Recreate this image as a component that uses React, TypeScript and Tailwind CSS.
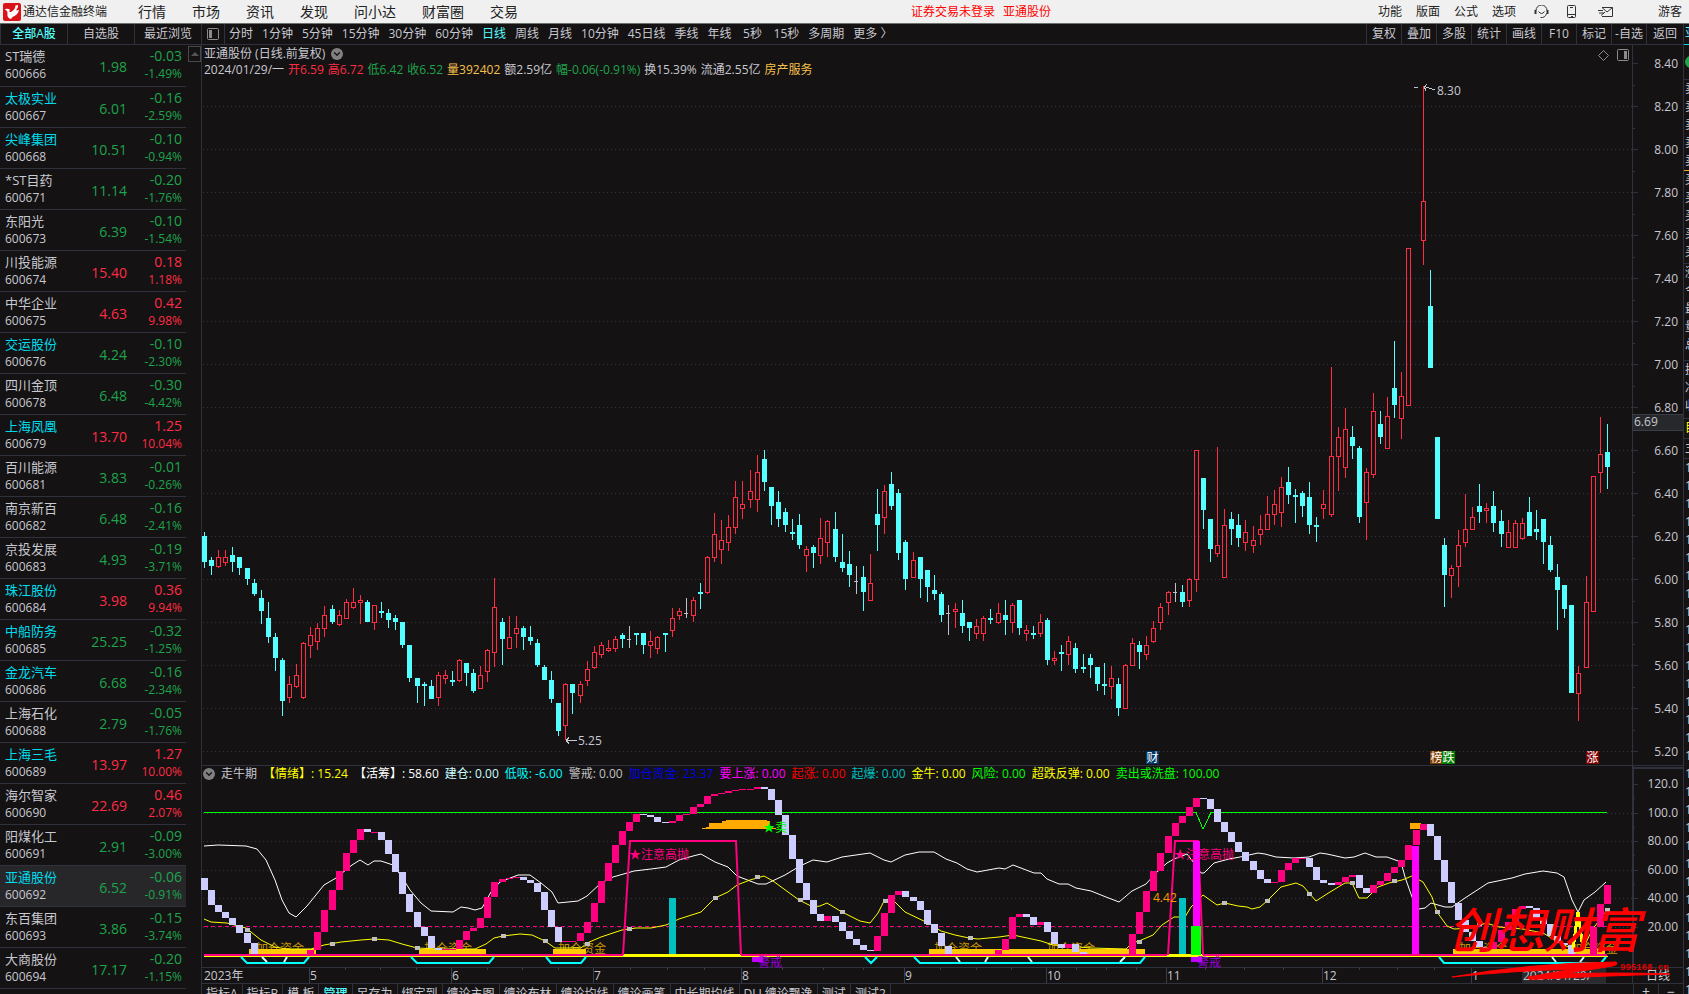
import { useState } from "react";
import { ChevronDown } from "lucide-react";

type Stock = [name: string, code: string, price: string, change: string, percent: string, marked?: boolean];

// 行情列表 //
const stocks: Stock[] = [
    ["ST瑞德", "600666", "1.98", "-0.03", "-1.49%"],
    ["太极实业", "600667", "6.01", "-0.16", "-2.59%", true],
    ["尖峰集团", "600668", "10.51", "-0.10", "-0.94%", true],
    ["*ST目药", "600671", "11.14", "-0.20", "-1.76%"],
    ["东阳光", "600673", "6.39", "-0.10", "-1.54%"],
    ["川投能源", "600674", "15.40", "0.18", "1.18%"],
    ["中华企业", "600675", "4.63", "0.42", "9.98%"],
    ["交运股份", "600676", "4.24", "-0.10", "-2.30%", true],
    ["四川金顶", "600678", "6.48", "-0.30", "-4.42%"],
    ["上海凤凰", "600679", "13.70", "1.25", "10.04%", true],
    ["百川能源", "600681", "3.83", "-0.01", "-0.26%"],
    ["南京新百", "600682", "6.48", "-0.16", "-2.41%"],
    ["京投发展", "600683", "4.93", "-0.19", "-3.71%"],
    ["珠江股份", "600684", "3.98", "0.36", "9.94%", true],
    ["中船防务", "600685", "25.25", "-0.32", "-1.25%", true],
    ["金龙汽车", "600686", "6.68", "-0.16", "-2.34%", true],
    ["上海石化", "600688", "2.79", "-0.05", "-1.76%"],
    ["上海三毛", "600689", "13.97", "1.27", "10.00%", true],
    ["海尔智家", "600690", "22.69", "0.46", "2.07%"],
    ["阳煤化工", "600691", "2.91", "-0.09", "-3.00%"],
    ["亚通股份", "600692", "6.52", "-0.06", "-0.91%", true],
    ["东百集团", "600693", "3.86", "-0.15", "-3.74%"],
    ["大商股份", "600694", "17.17", "-0.20", "-1.15%"],
];

const menus = ["行情", "市场", "资讯", "发现", "问小达", "财富圈", "交易"];
const systemMenus = ["功能", "版面", "公式", "选项"];
const listTabs = ["全部A股", "自选股", "最近浏览"];
const periods = [
    "分时", "1分钟", "5分钟", "15分钟", "30分钟", "60分钟", "日线", "周线", "月线",
    "10分钟", "45日线", "季线", "年线", "5秒", "15秒", "多周期", "更多 〉",
];
const tools = ["复权", "叠加", "多股", "统计", "画线", "F10", "标记", "-自选", "返回"];
const templates = [
    "指标A", "指标B", "模 板", "管理", "另存为", "绑定到", "缠论主图", "缠论布林", "缠论均线",
    "缠论画笔", "中长期均线", "DLL缠论飘逸", "测试", "测试2",
];

const quoteLine = [
    ["2024/01/29/一", "text-[#c8c8d0]"],
    ["开6.59", "text-[#ff2c44]"],
    ["高6.72", "text-[#ff2c44]"],
    ["低6.42", "text-[#1ea44b]"],
    ["收6.52", "text-[#1ea44b]"],
    ["量392402", "text-[#f4c04a]"],
    ["额2.59亿", "text-[#c8c8d0]"],
    ["幅-0.06(-0.91%)", "text-[#1ea44b]"],
    ["换15.39%", "text-[#c8c8d0]"],
    ["流通2.55亿", "text-[#c8c8d0]"],
    ["房产服务", "text-[#f4c04a]"],
];

const indicatorLine = [
    ["【情绪】: 15.24", "text-[#ffff00]"],
    ["【活筹】: 58.60", "text-white"],
    ["建仓: 0.00", "text-[#ccffff]"],
    ["低吸: -6.00", "text-[#00ffff]"],
    ["警戒: 0.00", "text-[#c0c0c0]"],
    ["加仓资金: 23.37", "text-[#0000e8]"],
    ["要上涨: 0.00", "text-[#ff00ff]"],
    ["起涨: 0.00", "text-[#ff0000]"],
    ["起爆: 0.00", "text-[#00c0c0]"],
    ["金牛: 0.00", "text-[#ffff00]"],
    ["风险: 0.00", "text-[#00ff00]"],
    ["超跌反弹: 0.00", "text-[#ffff00]"],
    ["卖出或洗盘: 100.00", "text-[#00ff00]"],
];

// K线: 类型(u 阳 / d 阴 / f 平), 最高, 实体上沿, 实体下沿, 最低 //
const candles = `d532,536,562,568 d557,560,566,575 u550,557,567,568 u550,557,563,566 d547,555,562,572 d557,557,568,575
d568,568,579,585 d579,583,594,596 d590,598,611,624 d602,618,637,643 d633,637,658,671 d658,660,701,716
u676,684,698,703 u664,675,687,688 u642,643,698,699 u627,635,646,658 u623,628,642,650 u606,615,629,637
d605,609,622,624 u610,615,625,626 u599,602,619,619 u588,602,608,609 u595,600,603,624 d600,602,622,622
u605,605,623,630 d602,611,613,618 d609,613,620,628 d615,618,622,630 d622,622,645,648 d645,645,678,682
d678,678,686,703 d682,684,686,706 d680,686,699,699 u672,675,698,706 u670,675,679,684 d671,680,682,686
u659,660,681,682 d663,663,673,686 d669,673,691,693 u666,675,689,689 u649,650,672,682 u578,607,653,667
d618,622,639,665 u616,637,649,649 u616,628,634,648 d626,628,637,650 d626,637,641,645 d639,643,665,667
d665,667,680,680 d671,680,699,703 d703,703,731,736 u683,684,726,740 d684,684,693,714 u681,684,696,703
u661,669,681,686 u646,652,668,669 u642,645,655,658 u640,648,651,652 u636,639,649,652 d633,635,639,648
f626,639,640,648 d633,633,635,645 d633,633,645,654 u631,641,646,658 u636,637,649,654 d633,633,635,652
u608,618,631,637 u608,611,616,620 f598,613,614,618 u597,600,616,622 d583,592,594,609 u556,557,593,594
u513,534,558,562 u520,540,550,564 u515,527,543,551 u481,497,528,534 u481,504,509,519 u470,491,500,508
u455,472,500,512 d450,459,482,491 d487,487,506,525 d491,502,519,527 d508,512,525,532 d519,532,534,540
d514,525,545,549 u546,549,556,572 d545,547,553,568 u518,538,556,564 u520,521,543,557 d512,529,557,562
d534,562,568,572 d551,564,575,587 f566,581,582,594 d566,577,592,611 u554,583,601,601 d489,514,525,551
u485,491,518,534 d472,484,506,510 d489,493,553,560 d540,542,579,590 u552,560,578,578 d557,557,579,598
d570,570,587,602 d575,590,594,600 d592,594,615,622 f605,613,614,635 u603,609,612,628 d600,613,626,633
d622,622,628,641 u619,626,634,639 u616,618,634,641 d609,618,620,624 u603,613,623,624 d600,615,620,635
u603,605,623,633 d600,600,628,635 u625,630,634,641 d626,633,635,639 u614,622,634,637 d618,620,660,665
u651,658,661,665 d645,652,654,671 u636,641,655,665 d643,648,669,673 d654,667,669,673 d654,658,665,678
d667,667,684,691 d663,684,686,695 u666,678,687,699 d678,684,708,716 u664,665,709,709 u638,643,666,666
d641,645,652,669 u636,645,655,660 u621,628,642,643 u603,607,623,630 u591,592,603,615 f583,592,593,602
d585,592,602,607 u578,579,601,607 u450,450,580,592 d478,478,510,529 d519,519,549,562 u447,545,554,557
u509,525,578,578 d512,519,529,545 d514,525,538,547 u520,532,543,551 u526,540,546,553 u515,529,535,545
u496,514,530,530 u490,504,515,525 u477,487,513,527 d467,482,495,504 d489,495,497,523 d491,493,506,517
d482,497,525,534 d517,525,527,542 u490,504,509,519 u367,456,515,517 u427,437,457,491 u408,429,468,478
d426,437,446,459 d446,448,517,523 u468,472,503,540 u393,411,475,478 d411,424,437,444 u397,416,449,449
d341,388,405,418 u372,396,419,439 u248,248,406,406 f87,87,88,88 u86,201,241,265 d270,306,368,368
d437,437,519,519 d538,545,575,607 u565,568,576,598 u530,545,567,587 u494,529,543,547 u507,517,530,530
d484,506,512,523 u503,508,511,523 d491,506,523,532 d510,521,534,547 u520,532,548,548 u520,523,548,548
u518,523,539,540 d497,512,536,536 d510,529,532,540 d519,519,542,564 d536,545,570,572 d564,577,590,630
d585,585,609,618 d605,605,693,693 u666,673,694,721 u576,602,668,668 u476,476,612,612 u417,454,473,493
d424,452,467,489`
    .split(/\s+/)
    .map(item => ({ kind: item[0], ys: item.slice(1).split(",").map(Number) }));

// 走牛期 阶梯柱 //
const steps = [
    878, 890, 905, 912, 918, 925, 933, 943, 954, 956, 955, 955, 955, 955, 955, 955, 950, 932, 910, 890, 871, 853, 840,
    829, 832, 832, 840, 854, 872, 894, 912, 927, 936, 948, 950, 949, 949, 940, 931, 928, 918, 897, 882, 879, 878,
    877, 880, 883, 892, 910, 927, 942, 941, 941, 933, 922, 903, 881, 863, 845, 831, 822, 814, 815, 817, 822, 823,
    821, 815, 814, 807, 804, 796, 794, 793, 791, 790, 789, 789, 787, 789, 800, 815, 835, 859, 883, 900, 914, 921,
    916, 922, 931, 939, 945, 950, 951, 936, 913, 895, 891, 897, 901, 910, 924, 933, 946, 955, 955, 955, 955, 955,
    955, 955, 950, 939, 917, 914, 917, 925, 922, 932, 944, 948, 944, 952, 955, 955, 955, 955, 955, 955, 955, 934,
    912, 891, 871, 853, 836, 823, 816, 807, 798, 799, 809, 822, 832, 842, 852, 861, 870, 879, 883, 882, 870, 863,
    858, 858, 867, 880, 883, 885, 882, 877, 875, 888, 893, 885, 881, 873, 867, 860, 845, 830, 824, 836, 860, 882,
    903, 920, 932, 941, 947, 949, 942, 930, 922, 909, 906, 908, 918, 924, 936, 943, 945, 955, 955, 955, 927, 904, 885,
];

const whiteLine = `204,846 218,845 246,846 257,849 266,860 275,880 282,900 289,913 296,917 307,906 324,885 336,878
352,865 360,860 368,865 374,861 381,861 393,865 402,877 410,890 421,903 431,911 453,912 461,907 468,908 475,910
482,908 491,892 500,882 518,875 530,875 541,883 552,892 558,903 578,901 587,896 601,883 613,877 634,871 651,869
666,867 679,860 693,856 701,854 715,862 728,867 737,876 758,884 766,884 785,875 800,866 813,860 827,862 842,857
870,853 884,860 891,862 905,855 919,852 934,852 946,859 957,863 967,869 977,872 999,868 1005,869 1013,865
1034,873 1041,873 1047,879 1059,884 1068,884 1076,888 1091,891 1106,897 1119,902 1132,891 1146,884 1156,873
1167,863 1174,859 1187,854 1194,863 1201,873 1204,873 1214,863 1229,859 1240,857 1258,853 1265,854 1276,857
1294,858 1309,857 1320,853 1327,854 1345,858 1354,857 1365,853 1376,857 1387,857 1401,862 1405,877 1412,897
1419,909 1425,908 1431,903 1445,907 1452,907 1465,898 1488,883 1512,878 1525,874 1543,871 1557,873 1564,877
1572,900 1578,912 1584,900 1595,892 1606,882`;

const yellowLine = `204,919 211,922 227,923 246,928 261,940 275,947 286,949 311,949 324,945 341,942 361,940 374,939
389,940 402,944 417,948 439,949 475,949 486,944 494,938 503,936 520,934 532,935 545,941 555,948 581,948 587,943
601,937 622,930 636,928 651,928 666,925 679,919 701,912 715,898 728,892 737,885 750,880 764,876 773,881 799,900
813,907 820,906 827,903 842,912 860,921 870,923 878,913 884,901 892,899 905,912 928,923 941,931 955,935 969,938
978,939 999,937 1013,935 1027,938 1041,941 1053,945 1091,948 1126,949 1132,943 1139,941 1153,935 1162,925
1174,917 1185,917 1191,907 1203,895 1217,905 1225,903 1238,906 1247,907 1252,909 1260,907 1267,901 1281,887
1296,883 1303,886 1316,901 1330,892 1345,883 1352,883 1359,898 1367,898 1378,887 1389,883 1402,880 1412,876
1423,882 1432,897 1437,912 1447,926 1454,929 1472,928 1486,923 1499,927 1523,929 1543,933 1555,940 1570,948
1583,949 1592,930 1607,910`;

const markers = [
    [247, 930], [332, 944], [374, 939], [417, 948], [503, 936], [545, 941], [587, 944], [629, 929], [715, 898],
    [757, 877], [800, 900], [842, 912], [885, 901], [928, 923], [970, 938], [1139, 942], [1224, 903], [1267, 901],
    [1309, 894], [1352, 883], [1394, 881], [1437, 912], [1479, 924], [1607, 910],
];

const months = [
    [309, "5"], [451, "6"], [593, "7"], [741, "8"], [904, "9"], [1046, "10"], [1166, "11"], [1322, "12"], [1471, "1"],
] as const;
const monthTicks = [
    345, 380, 416, 487, 522, 558, 630, 667, 704, 782, 823, 863, 940, 976, 1011, 1076, 1106, 1136, 1205, 1244, 1283,
    1359, 1397, 1434,
];

const badges = [
    [1146, "财", "#003868"], [1430, "榜", "#804000"], [1442, "跌", "#008000"], [1586, "涨", "#800000"],
] as const;

const barX = (i: number) => Math.floor(204.5 + i * 7.085);
const isFall = (value: string) => value.startsWith("-");

function Logo() {
    return (
        <svg viewBox="0 0 18 18" className="h-[18px] w-[18px]" aria-hidden="true">
            <rect width="18" height="18" rx="2" fill="#d8141a" />
            <path d="M1.5 6.5 Q4 5 7 6.5 Q5.500 9.500 8 9 Q12 7 12.500 2.500 L15 2 Q15.500 4 13 7.500 L16 7 Q15 12 9.500 14 L8 16 Q3.500 15 4.500 10 Q4.500 7.500 1.500 6.500 Z" fill="#fff" />
        </svg>
    );
}

function PanelIcon() {
    return (
        <svg viewBox="0 0 12 12" className="h-3 w-3" aria-hidden="true">
            <rect x="0.5" y="0.5" width="11" height="11" rx="1" fill="none" stroke="#8c8c8c" />
            <rect x="2" y="2" width="3" height="8" fill="#8c8c8c" />
        </svg>
    );
}

function RoundArrow() {
    return (
        <button aria-label="展开" className="flex h-3 w-3 items-center justify-center rounded-full bg-[#808080]">
            <ChevronDown className="h-[10px] w-[10px] text-[#141213]" strokeWidth={3} />
        </button>
    );
}

// 顶部菜单 //
function MenuBar() {
    return (
        <header className="flex h-6 shrink-0 items-center border-b border-[#6a706c] bg-[#f0f0f0] text-[#222]">
            <div className="flex w-[138px] items-center gap-[2px] pl-[3px]">
                <Logo />
                <span className="text-xs">通达信金融终端</span>
            </div>
            <nav className="flex gap-[26px] text-sm leading-5">
                { menus.map(menu => <button key={menu}>{menu}</button>) }
            </nav>
            <div className="flex flex-1 justify-center gap-2 pl-[66px] text-xs text-[#ff0000]">
                <button>证券交易未登录</button>
                <button>亚通股份</button>
            </div>
            <nav className="flex items-center gap-[14px] text-xs">
                { systemMenus.map(menu => <button key={menu}>{menu}</button>) }
            </nav>
            <div className="flex items-center pl-[18px]">
                <button aria-label="客服" className="w-[33px]">
                    <svg viewBox="0 0 15 14" className="h-[14px] w-[15px]" fill="none" stroke="#333">
                        <path d="M2 5.500 A5.500 5.500 0 0 1 13 5.500 M12.500 8.500 A5.500 5.500 0 0 1 6.500 12.500 M4.500 6.500 Q7.500 10.500 10.500 6.500" />
                        <path d="M1.500 5 V9 M13.500 5 V9" strokeWidth="2" />
                    </svg>
                </button>
                <button aria-label="手机" className="w-[31px]">
                    <svg viewBox="0 0 10 14" className="h-[14px] w-[10px]" fill="none" stroke="#333">
                        <rect x="0.5" y="0.5" width="8" height="12" rx="1" />
                        <path d="M1 9.500 H8 M4 11.500 H6 M3 2.500 H6" />
                    </svg>
                </button>
                <button aria-label="消息" className="w-[60px]">
                    <svg viewBox="0 0 16 12" className="h-3 w-4" fill="none" stroke="#333">
                        <path d="M4 1.500 H14.500 V10.500 H4 M4 1.500 L9 6 L14.500 1.500 M0 4.500 H5 M1 7 H6 M3 9.500 L7 6" />
                    </svg>
                </button>
            </div>
            <button className="pr-[7px] text-xs">游客</button>
        </header>
    );
}

// 左侧股票列表 //
function StockList() {
    const [selected, setSelected] = useState("600692");
    const [tab, setTab] = useState("全部A股");

    return (
        <aside className="flex w-[202px] shrink-0 flex-col border-r border-[#2f313c]">
            <div className="grid h-[21px] shrink-0 grid-cols-3 border-b border-[#2f313c]">
                { listTabs.map(name => (
                    <button
                        key={name}
                        onClick={ () => setTab(name) }
                        className={`border-l border-[#2f313c] text-xs ${tab === name ? "font-medium text-[#54ffff]" : "text-[#c8c8d0]"}`}>
                        {name}
                    </button>
                )) }
            </div>
            <div className="flex min-h-0 flex-1 items-start justify-between overflow-hidden">
                <table className="w-[186px] border-collapse">
                    <tbody>
                        { stocks.map(([name, code, price, change, percent, marked]) => {
                            const color = isFall(change) ? "text-[#1ea44b]" : "text-[#ff2c44]";
                            return (
                                <tr
                                    key={code}
                                    onClick={ () => setSelected(code) }
                                    className={`h-[41px] border-b border-[#2f313c] leading-[18px] ${selected === code ? "bg-[#27272a]" : ""}`}>
                                    <td className="w-[70px] p-0 pl-[5px]">
                                        <div className={`text-[13px] ${marked ? "text-[#00dcec]" : "text-[#c8c8d0]"}`}>{name}</div>
                                        <div className="text-xs leading-[18px] text-[#c8c8d0]">{code}</div>
                                    </td>
                                    <td className={`p-0 pt-1 pr-[3px] text-right text-sm leading-[18px] ${color}`}>{price}</td>
                                    <td className={`w-14 p-0 pr-1 text-right ${color}`}>
                                        <div className="text-sm leading-[18px]">{change}</div>
                                        <div className="text-xs leading-[18px]">{percent}</div>
                                    </td>
                                </tr>
                            );
                        }) }
                    </tbody>
                </table>
                <button aria-label="向上滚动" className="mt-px flex h-4 w-[13px] items-center justify-center border border-[#48484c]">
                    <svg viewBox="0 0 8 4" className="h-1 w-2"><path d="M0 4 L4 0 L8 4 Z" fill="#555" /></svg>
                </button>
            </div>
        </aside>
    );
}

// 周期与工具栏 //
function PeriodBar() {
    const [period, setPeriod] = useState("日线");

    return (
        <div className="flex h-[21px] shrink-0 items-stretch border-b border-[#2f313c] text-xs text-[#c8c8d0]">
            <button aria-label="侧栏" className="flex w-[23px] items-center justify-center border-r border-[#2f313c]">
                <PanelIcon />
            </button>
            <div className="flex flex-1 items-center gap-[9px] pl-1">
                { periods.map(name => (
                    <button
                        key={name}
                        onClick={ () => setPeriod(name) }
                        className={`min-w-6 whitespace-nowrap ${period === name ? "text-[#54ffff]" : ""}`}>
                        {name}
                    </button>
                )) }
            </div>
            { tools.map(name => (
                <button key={name} className="w-[35px] border-l border-[#2f313c] whitespace-nowrap last:w-[37px]">{name}</button>
            )) }
        </div>
    );
}

// 日K线 //
function PriceChart() {
    const levels = Array.from({ length: 17 }, (_, i) => ({ y: 63 + i * 43, label: (8.4 - i * 0.2).toFixed(2) }));

    return (
        <section className="relative min-h-0 flex-1 border-b border-[#2f313c]">
            <svg viewBox="202 45 1481 720" className="absolute inset-0 h-full w-full" shapeRendering="crispEdges">
                { levels.map(({ y, label }, i) => (
                    <g key={label}>
                        { i > 0 && <path d={`M203 ${y + 0.5} H1632`} stroke="#33353f" strokeDasharray="1 3" /> }
                        <path d={`M1632 ${y + 0.5} H1638 M1632 ${y + 22} h3`} stroke="#2f313c" />
                        <text x="1678" y={y + 5} textAnchor="end" fill="#c8c8d0" fontSize="12">{label}</text>
                    </g>
                )) }
                <path d="M1632.500 45 V765" stroke="#2f313c" />
                <rect x="1632.500" y="414.500" width="51" height="16" fill="#27282b" stroke="#3a3c48" />
                <text x="1634" y="426" fill="#c8c8d0" fontSize="12">6.69</text>
                { candles.map(({ kind, ys: [high, top, bottom, low] }, i) => {
                    const x = barX(i);
                    if (kind === "u") {
                        return (
                            <g key={i} stroke="#ff2c44" fill="none">
                                <path d={`M${x + 0.5} ${high} V${top} M${x + 0.5} ${bottom} V${low}`} />
                                <rect x={x - 1.5} y={top + 0.5} width="4" height={bottom - top - 1} />
                            </g>
                        );
                    }
                    return (
                        <g key={i} fill={kind === "d" ? "#54ffff" : "#c0c0cc"}>
                            <rect x={x} y={high} width="1" height={low - high} />
                            <rect x={x - 2} y={top} width={kind === "d" ? 5 : 4} height={bottom - top} />
                        </g>
                    );
                }) }
                <path d="M566 740.500 H577 M566 740.500 l3 -3 M566 740.500 l3 3" stroke="#c8c8d0" />
                <text x="578" y="745" fill="#c8c8d0" fontSize="12">5.25</text>
                <path d="M1424 86.500 L1435 90 M1424 86.500 l3 -2 M1424 86.500 l2 4" stroke="#c8c8d0" fill="none" />
                <text x="1437" y="95" fill="#c8c8d0" fontSize="12">8.30</text>
                { badges.map(([x, label, color]) => (
                    <g key={label}>
                        <rect x={x} y="751" width="13" height="13" fill={color} />
                        <text x={x + 0.5} y="762" fill="#fff" fontSize="12">{label}</text>
                    </g>
                )) }
            </svg>
            <div className="relative flex justify-between pl-[2px] pr-[54px] pt-px text-xs leading-4">
                <div>
                    <div className="flex items-center gap-[6px] text-[#c8c8d0]">
                        <span>亚通股份 (日线.前复权)</span>
                        <RoundArrow />
                    </div>
                    <div className="flex gap-1">
                        { quoteLine.map(([text, color]) => <span key={text} className={color}>{text}</span>) }
                    </div>
                </div>
                <div className="flex h-[18px] items-center gap-2">
                    <svg viewBox="0 0 11 11" className="h-[11px] w-[11px]"><path d="M5.500 0.500 L10.500 5.500 L5.500 10.500 L0.500 5.500 Z" fill="none" stroke="#8c8c8c" /></svg>
                    <span className="rotate-180"><PanelIcon /></span>
                </div>
            </div>
        </section>
    );
}

// 副图指标: 走牛期 //
function IndicatorChart() {
    const levels = ["120.0", "100.0", "80.00", "60.00", "40.00", "20.00"];
    const funds = [[256, 249, 67], [424, 419, 67], [558, 553, 33], [934, 929, 100], [1047, 1029, 116], [1459, 1453, 100], [1570, 1553, 52]];

    return (
        <section className="relative h-[202px] shrink-0 border-b border-[#2f313c]">
            <svg viewBox="202 766 1481 201" className="absolute inset-0 h-full w-full overflow-visible" shapeRendering="crispEdges">
                { levels.map((label, i) => {
                    const y = Math.round(784 + i * 28.5);
                    return (
                        <g key={label}>
                            { i > 0 && <path d={`M203 ${y + 0.5} H1632`} stroke="#33353f" strokeDasharray="1 3" /> }
                            <path d={`M1633 ${y + 0.5} H1638 M1633 ${y + 14.5} h2`} stroke="#2f313c" />
                            <text x="1678" y={y + 4} textAnchor="end" fill="#c8c8d0" fontSize="12">{label}</text>
                        </g>
                    );
                }) }
                <path d="M1633 766 V968 M1633 767.500 H1683" stroke="#2f313c" strokeWidth="2" fill="none" />
                <path d="M204 812.500 H1196 L1203 829 L1211 812.500 H1607" stroke="#00ff00" fill="none" />
                <path d="M204 926.500 H1607" stroke="#ff0080" strokeDasharray="4 3" />

                { funds.map(([x]) => <text key={x} x={x} y="953" fill="#c89600" fontSize="12">加仓资金</text>) }
                { funds.map(([x, left, width]) => <rect key={x} x={left} y="949" width={width} height="5" fill="#ffc800" />) }

                <g fill="none" shapeRendering="auto">
                    <polyline points={whiteLine} stroke="#fff" />
                    <polyline points={yellowLine} stroke="#ffff00" />
                </g>
                { markers.map(([x, y]) => <rect key={x} x={x - 2} y={y - 2} width="5" height="4" fill="#c0c0c0" />) }

                <path d="M702 829 V828 L709 827 V823 H722 V821 L730 820 H763 L770 821 V826 L777 829 Z" fill="#ffaa00" />
                <rect x="1410" y="823" width="11" height="6" fill="#ffaa00" />
                <rect x="669" y="898" width="7" height="57" fill="#00c0c0" />
                <rect x="1179" y="898" width="7" height="57" fill="#00c0c0" />
                { steps.slice(1).map((y, i) => (
                    <rect
                        key={i}
                        x={barX(i) - 3}
                        y={Math.min(y, steps[i])}
                        width="7"
                        height={Math.max(Math.abs(y - steps[i]), 1)}
                        fill={y > steps[i] ? "#ccccff" : "#ff0080"} />
                )) }

                <path d="M204 955 H1607" stroke="#ff0080" strokeWidth="2" />
                <path d="M204 956.500 H1608" stroke="#ffff00" />
                <path d="M623 955.500 H741 M1167 955.500 H1203" stroke="#ffff00" strokeWidth="3" />
                <path d="M623 955 L630 841 H736 L741 955 M1168 955 L1175 841 H1198 L1203 955" stroke="#ff0080" strokeWidth="2" fill="none" shapeRendering="auto" />
                <rect x="1193" y="841" width="7" height="85" fill="#ff00ff" />
                <rect x="1191" y="926" width="10" height="29" fill="#00ff00" />
                <rect x="1412" y="846" width="7" height="108" fill="#ff00ff" />
                <path d="M1573 949 L1578 912 L1583 949" stroke="#ffff00" strokeWidth="3" fill="none" />

                <text x="758" y="967" fill="#9c00dc" fontSize="12">警戒</text>
                <text x="1197" y="967" fill="#9c00dc" fontSize="12">警戒</text>
                <path d="M752 957 h11 v5 h-11 Z M1191 957 h11 v5 h-11 Z" fill="#c000ff" />
                <text x="629" y="859" fill="#ff0080" fontSize="12">★注意高抛</text>
                <text x="1174" y="859" fill="#ff0080" fontSize="12">★注意高抛</text>
                <text x="763" y="832" fill="#00ff00" fontSize="12">★卖</text>
                <text x="1153" y="902" fill="#ff9c00" fontSize="12">4.42</text>

                <g fill="none" strokeWidth="2" shapeRendering="auto">
                    <path
                        d="M241 957 L247 963 H304 L309 957 M411 957 L417 963 H489 L494 957 M546 957 L551 963 H581 L586 957
                            M865 957 L871 963 L877 957 M914 957 L920 963 H1140 L1145 957 M1439 957 L1444 963 H1601 L1606 957"
                        stroke="#00ffff" />
                    <path
                        d="M262 957 L267 962 M287 957 L284 962 M956 957 L960 962 M988 957 L985 962 M1028 957 L1032 962
                            M1125 957 L1120 962 M1552 957 L1556 962 M1584 957 L1580 962"
                        stroke="#ccffff" />
                </g>
            </svg>
            <div className="relative flex items-center gap-[6px] whitespace-nowrap pl-px text-xs leading-4">
                <RoundArrow />
                <span className="text-[#c8c8d0]">走牛期</span>
                { indicatorLine.map(([text, color]) => <span key={text} className={color}>{text}</span>) }
            </div>
        </section>
    );
}

// 时间轴 //
function TimeAxis() {
    return (
        <div className="relative h-4 shrink-0 border-b border-[#2f313c]">
            <svg viewBox="202 968 1481 15" className="absolute inset-0 h-full w-full overflow-visible" shapeRendering="crispEdges">
                <text x="204" y="980" fill="#c8c8d0" fontSize="12">2023年</text>
                { months.map(([x, label]) => (
                    <g key={label}>
                        <path d={`M${x + 0.5} 968 V983`} stroke="#3a3c48" />
                        <text x={x + 1} y="980" fill="#c8c8d0" fontSize="12">{label}</text>
                    </g>
                )) }
                <path d={monthTicks.map(x => `M${x + 0.5} 967 v3`).join(" ")} stroke="#3a3c48" />
                <rect x="1522" y="968" width="84" height="15" fill="#2b2b2e" />
                <text x="1523" y="980" fill="#c8c8d0" fontSize="12">2024/01/29/一</text>
                <path d="M1632.500 967 V983" stroke="#2f313c" />
                <text x="1646" y="980" fill="#c8c8d0" fontSize="12">日线</text>

                <text x="1448" y="948" fill="#ff0000" fontSize="48" fontStyle="italic" fontWeight="500">创想财富</text>
                <g fill="#ff0000" shapeRendering="auto">
                    <path d="M1452 977 Q1530 963 1616 962 Q1619 965 1612 966 Q1590 970 1560 974 Q1620 972 1670 974 Q1600 976 1540 979 Q1526 980 1528 977 L1574 969 Q1510 971 1452 977 Z" stroke="#ff0000" />
                </g>
                <text x="1620" y="970" fill="#e00000" fontSize="9" fontWeight="700" fontFamily="Liberation Mono, monospace">995168.cn</text>
            </svg>
        </div>
    );
}

function TemplateBar() {
    return (
        <div className="flex h-[10px] shrink-0 items-start overflow-hidden text-xs leading-5 text-[#c8c8d0]">
            { templates.map(name => (
                <button
                    key={name}
                    className={`border-r border-[#2f313c] px-1 whitespace-nowrap ${name === "管理" ? "font-medium text-[#54ffff]" : ""}`}>
                    {name}
                </button>
            )) }
            <div className="ml-auto flex text-sm leading-4">
                <button aria-label="放大" className="w-[25px] border-l border-[#2f313c]">+</button>
                <button aria-label="缩小" className="w-[25px] border-l border-[#2f313c]">−</button>
            </div>
        </div>
    );
}

// 右侧盘口边缘 //
function QuoteEdge() {
    const asks = ["卖", "卖", "卖", "卖", "卖"];
    const bids = ["买", "买", "买", "买", "买"];

    return (
        <aside className="w-[6px] shrink-0 overflow-hidden whitespace-nowrap border-l border-[#2f313c] text-xs leading-[18px] text-[#c8c8d0]">
            <div className="h-[21px] border-b border-[#00dcec] pl-px text-[#54ffff]">亚</div>
            <div className="flex h-[34px] items-center pl-px"><span className="h-3 w-3 shrink-0 rounded-full bg-[#1ea44b]" /></div>
            <div className="h-[91px] border-t border-[#2f313c] pl-px">{ asks.map((item, i) => <div key={i}>{item}</div>) }</div>
            <div className="h-[93px] border-t border-[#f4a020] pl-px">{ bids.map((item, i) => <div key={i}>{item}</div>) }</div>
            <div className="h-[97px] border-t border-[#2f313c] pl-px">{ ["涨", "今", "最", "量", "总"].map(item => <div key={item}>{item}</div>) }</div>
            <div className="h-[58px] border-t border-[#2f313c] pl-px">{ ["换", "净", "收"].map(item => <div key={item}>{item}</div>) }</div>
            <div className="h-5 border-t border-[#2f313c] pl-px text-[#ffff00]">目</div>
            <div className="h-5 border-t border-[#2f313c] pl-px">主</div>
            <div className="border-t border-[#2f313c] pl-px">{ Array.from({ length: 30 }, (_, i) => <div key={i}>1</div>) }</div>
        </aside>
    );
}

export default function App() {
    return (
        <div className="flex h-screen flex-col overflow-hidden bg-[#141213] font-['Open_Sans','Noto_Sans_CJK_SC',sans-serif]">
            <MenuBar />
            <div className="flex min-h-0 flex-1">
                <StockList />
                <main className="flex min-w-0 flex-1 flex-col">
                    <PeriodBar />
                    <PriceChart />
                    <IndicatorChart />
                    <TimeAxis />
                    <TemplateBar />
                </main>
                <QuoteEdge />
            </div>
        </div>
    );
}
